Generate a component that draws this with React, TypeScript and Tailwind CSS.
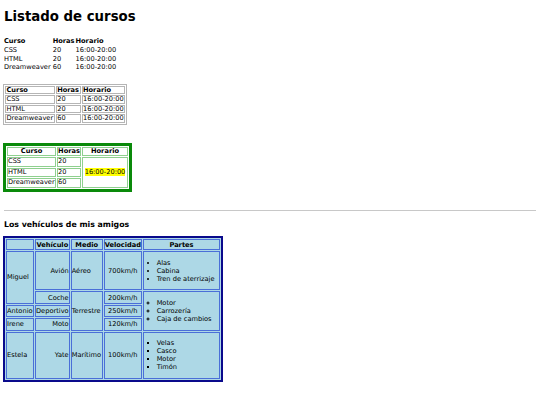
import React from 'react';

const cursos = [
  { curso: 'CSS', horas: '20', horario: '16:00-20:00' },
  { curso: 'HTML', horas: '20', horario: '16:00-20:00' },
  { curso: 'Dreamweaver', horas: '60', horario: '16:00-20:00' },
];

const App: React.FC = () => {
  // cell styles for the vehicles table
  const vh = 'border border-[#4a6fd8] px-0 py-[0.5px] text-center font-bold';
  const vc = 'border border-[#4a6fd8] px-0 py-0 align-middle';

  return (
    <div className="min-h-screen w-full bg-white text-black text-[6.65px] leading-[7.7px] px-[4px] pt-[9px]" style={{ fontFamily: '"DejaVu Sans", Verdana, sans-serif' }}>
      <h1 className="text-[13.3px] leading-[15.5px] font-bold">Listado de cursos</h1>

      {/* plain table */}
      <table className="mt-[13px] border-separate border-spacing-x-[1px] border-spacing-y-0 -ml-[1px]">
        <thead>
          <tr>
            <th className="text-left px-0 py-[0.5px] leading-[7.8px] font-bold">Curso</th>
            <th className="text-left px-0 py-[0.5px] leading-[7.8px] font-bold">Horas</th>
            <th className="text-left px-0 py-[0.5px] leading-[7.8px] font-bold">Horario</th>
          </tr>
        </thead>
        <tbody>
          {cursos.map((c) => (
            <tr key={c.curso}>
              <td className="pr-[1px] py-[0.5px] leading-[7.8px]">{c.curso}</td>
              <td className="pr-[6px] py-[0.5px] leading-[7.8px]">{c.horas}</td>
              <td className="py-[0.5px] leading-[7.8px]">{c.horario}</td>
            </tr>
          ))}
        </tbody>
      </table>

      {/* bordered table */}
      <table className="mt-[11px] -ml-[1px] border-separate border-spacing-[1.5px] border border-[#b5b5b5] leading-[6.5px]">
        <thead>
          <tr>
            <th className="border border-[#b5b5b5] text-left px-[0.5px] py-0 font-bold">Curso</th>
            <th className="border border-[#b5b5b5] text-left px-[0.5px] py-0 font-bold">Horas</th>
            <th className="border border-[#b5b5b5] text-left px-[0.5px] py-0 font-bold">Horario</th>
          </tr>
        </thead>
        <tbody>
          {cursos.map((c) => (
            <tr key={c.curso}>
              <td className="border border-[#b5b5b5] px-[0.5px] py-0">{c.curso}</td>
              <td className="border border-[#b5b5b5] px-[0.5px] py-0">{c.horas}</td>
              <td className="border border-[#b5b5b5] px-[0.5px] py-0">{c.horario}</td>
            </tr>
          ))}
        </tbody>
      </table>

      {/* green table */}
      <table className="mt-[18px] -ml-[1px] border-separate border-spacing-[1px] border-[3px] border-[#0a8a0a] leading-[7.6px]">
        <thead>
          <tr>
            <th className="border border-[#8fd08f] text-center px-0 py-0 w-[49px] font-bold">Curso</th>
            <th className="border border-[#8fd08f] text-center px-0 py-0 w-[24px] font-bold">Horas</th>
            <th className="border border-[#8fd08f] text-center px-0 py-0 w-[46px] font-bold">Horario</th>
          </tr>
        </thead>
        <tbody>
          <tr>
            <td className="border border-[#8fd08f] px-0 py-0">CSS</td>
            <td className="border border-[#8fd08f] px-0 py-0">20</td>
            <td rowSpan={3} className="border border-[#8fd08f] px-0 py-0 text-center align-middle">
              <span className="bg-[#ffff00]">16:00-20:00</span>
            </td>
          </tr>
          <tr>
            <td className="border border-[#8fd08f] px-0 py-0">HTML</td>
            <td className="border border-[#8fd08f] px-0 py-0">20</td>
          </tr>
          <tr>
            <td className="border border-[#8fd08f] px-0 py-0">Dreamweaver</td>
            <td className="border border-[#8fd08f] px-0 py-0">60</td>
          </tr>
        </tbody>
      </table>

      <hr className="mt-[18px] border-t border-[#c8c8c8]" />

      <h3 className="mt-[9px] text-[7.8px] leading-[9px] font-bold">Los vehículos de mis amigos</h3>

      {/* vehicles table */}
      <table className="mt-[7px] -ml-[1px] border-separate border-spacing-[1px] border-2 border-[#0a0a8c] bg-[#add8e6] leading-[8px]">
        <thead>
          <tr>
            <th className={`${vh} w-[28px]`}></th>
            <th className={`${vh} w-[34px]`}>Vehículo</th>
            <th className={`${vh} w-[32px]`}>Medio</th>
            <th className={`${vh} w-[38px]`}>Velocidad</th>
            <th className={`${vh} w-[77px]`}>Partes</th>
          </tr>
        </thead>
        <tbody>
          <tr>
            <td rowSpan={2} className={`${vc} text-left`}>Miguel</td>
            <td className={`${vc} text-right`}>Avión</td>
            <td className={`${vc} text-left`}>Aéreo</td>
            <td className={`${vc} text-center`}>700km/h</td>
            <td className={`${vc} text-left`}>
              <ul className="list-disc list-inside pl-[3px] my-[6.65px]">
                <li>Alas</li>
                <li>Cabina</li>
                <li>Tren de aterrizaje</li>
              </ul>
            </td>
          </tr>
          <tr>
            <td className={`${vc} text-right`}>Coche</td>
            <td rowSpan={3} className={`${vc} text-left`}>Terrestre</td>
            <td className={`${vc} text-center`}>200km/h</td>
            <td rowSpan={3} className={`${vc} text-left`}>
              <ul className="list-[circle] list-inside pl-[3px] my-[6.65px]">
                <li>Motor</li>
                <li>Carrozería</li>
                <li>Caja de cambios</li>
              </ul>
            </td>
          </tr>
          <tr>
            <td className={`${vc} text-left`}>Antonio</td>
            <td className={`${vc} text-right`}>Deportivo</td>
            <td className={`${vc} text-center`}>250km/h</td>
          </tr>
          <tr>
            <td className={`${vc} text-left`}>Irene</td>
            <td className={`${vc} text-right`}>Moto</td>
            <td className={`${vc} text-center`}>120km/h</td>
          </tr>
          <tr>
            <td className={`${vc} text-left`}>Estela</td>
            <td className={`${vc} text-right`}>Yate</td>
            <td className={`${vc} text-left`}>Marítimo</td>
            <td className={`${vc} text-center`}>100km/h</td>
            <td className={`${vc} text-left`}>
              <ul className="list-[square] list-inside pl-[3px] my-[6.65px]">
                <li>Velas</li>
                <li>Casco</li>
                <li>Motor</li>
                <li>Timón</li>
              </ul>
            </td>
          </tr>
        </tbody>
      </table>
    </div>
  );
};

export default App;
